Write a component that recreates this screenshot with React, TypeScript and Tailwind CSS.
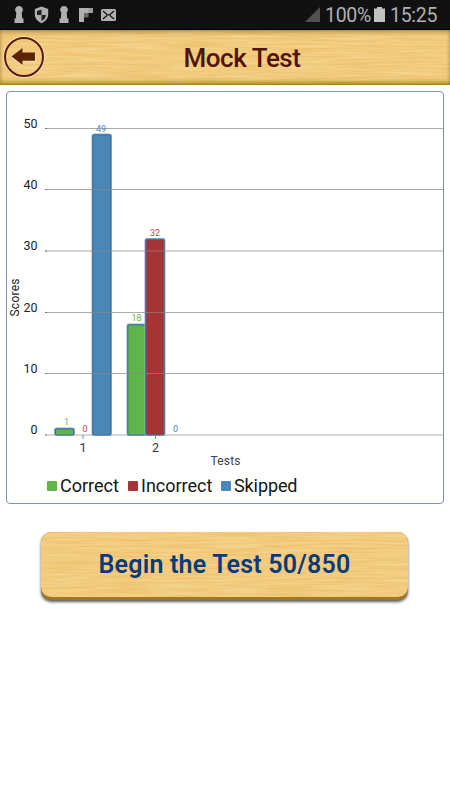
import React from "react";

function Wood({ id, seed }: { id: string; seed: number }) {
  return (
    <svg className="absolute inset-0 h-full w-full" aria-hidden="true">
      <filter id={id} x="0" y="0" width="100%" height="100%" colorInterpolationFilters="sRGB">
        <feTurbulence type="fractalNoise" baseFrequency="0.018 0.5" numOctaves="5" seed={seed} />
        <feColorMatrix values="0.04 0 0 0 0.927  0.12 0 0 0 0.735  0.2 0 0 0 0.395  0 0 0 0 1" />
      </filter>
      <rect width="100%" height="100%" filter={`url(#${id})`} />
    </svg>
  );
}

function Keyhole() {
  return (
    <svg width="10" height="17" viewBox="0 0 10 17" fill="#b0b0b0">
      <path d="M5 0a3.800 3.800 0 0 1 2.700 6.500L8.200 12.500H9.500V17H.5v-4.500h1.300L2.300 6.500A3.800 3.800 0 0 1 5 0Z" />
    </svg>
  );
}

function StatusBar() {
  return (
    <div className="flex h-[30px] items-center border-b border-black bg-[#111] pl-[14px] pr-[12px] text-[#b0b0b0]">
      <Keyhole />
      <svg className="ml-[10px]" width="15" height="18" viewBox="0 0 15 18">
        <path d="M7.500 .5 14.200 3v5.500c0 4-3 7-6.700 8.700C3.800 15.500.8 12.500.8 8.500V3Z" fill="#b0b0b0" />
        <path d="M7.500 3.500v5.500H3V5ZM7.500 9H12c-.3 2.700-2 4.700-4.500 6Z" fill="#202020" />
      </svg>
      <div className="ml-[10px]"><Keyhole /></div>
      <svg className="ml-[10px]" width="14" height="14" viewBox="0 0 14 14">
        <path d="M0 0h14v5H5v9H0Z" fill="#b0b0b0" />
        <path d="M5 5h4.500v4.500H5Z" fill="#666" />
        <path d="M5 5h4.500V0H14v5H9.500V5Z" fill="#999" />
      </svg>
      <svg className="ml-[8px]" width="15" height="12" viewBox="0 0 15 12">
        <rect width="15" height="12" rx="1.500" fill="#b0b0b0" />
        <path d="m2 2 4 3.400q1.500 1.200 3 0L13 2M2 10l4-3.500M13 10 9 6.500" fill="none" stroke="#151515" strokeWidth="1.300" />
      </svg>
      <svg className="ml-auto" width="15" height="15" viewBox="0 0 15 15">
        <path d="M15 0v15H0Z" fill="#505050" />
      </svg>
      <span className="ml-[5px] w-[47px] whitespace-nowrap pt-px text-[19.5px] leading-[29px] tracking-[-0.3px]">100%</span>
      <svg className="ml-[2px]" width="11" height="15" viewBox="0 0 11 15">
        <path d="M3 0h5v1.500h3v13.500H0V1.500h3Z" fill="#c2c2c2" />
      </svg>
      <span className="ml-[5px] w-[48px] whitespace-nowrap pt-px text-[19.5px] leading-[29px] tracking-[-0.3px]">15:25</span>
    </div>
  );
}

function Header() {
  return (
    <header className="relative h-[55px] overflow-hidden">
      <Wood id="wood-header" seed={4} />
      <div className="relative flex h-full items-center justify-center border-b border-[#a98222] pl-[34px] shadow-[inset_0_3px_4px_-1px_rgba(120,85,20,0.55),inset_0_-3px_4px_-1px_rgba(120,85,20,0.6)]">
        <svg className="absolute left-[3px] top-[6px]" width="42" height="42" viewBox="0 0 42 42">
          <circle cx="21" cy="21" r="19.500" fill="none" stroke="#fff1cb" strokeWidth="2.500" />
          <circle cx="21" cy="21" r="19" fill="none" stroke="#5c1b08" strokeWidth="2" />
          <path d="M8.500 21.500 19.500 13v4.500h13v8h-13V30Z" fill="#fff1cb" />
          <path d="M8.500 20.500 19.500 12v4.500H32v8.200H19.500V29Z" fill="#5b2404" />
        </svg>
        <h1 className="whitespace-nowrap pt-[2px] text-[26px] font-medium leading-[56px] tracking-[-0.45px] text-[#501408]">Mock Test</h1>
      </div>
    </header>
  );
}

const gridLines = [
  { label: "50", y: 36.5 },
  { label: "40", y: 97.5 },
  { label: "30", y: 159 },
  { label: "20", y: 220.5 },
  { label: "10", y: 281.5 },
];

const bars = [
  { x: 48, y: 336.5, w: 19, color: "#5fb548" },
  { x: 85.5, y: 42.5, w: 18.5, color: "#4a87b7" },
  { x: 120.5, y: 232.5, w: 18.5, color: "#5fb548" },
  { x: 138.5, y: 147, w: 19, color: "#a63335" },
];

const values = [
  { x: 59.5, y: 333, text: "1", color: "#6dbb58" },
  { x: 78, y: 340, text: "0", color: "#b84b4d" },
  { x: 94, y: 39.5, text: "49", color: "#4a87b7" },
  { x: 129.5, y: 229, text: "18", color: "#5fb548" },
  { x: 148, y: 144, text: "32", color: "#b84b4d" },
  { x: 168.5, y: 340, text: "0", color: "#4a87b7" },
];

function Chart() {
  return (
    <svg className="block" width="436" height="380" viewBox="0 0 436 380">
      <path d="M38 343H436" stroke="#d7d7d7" strokeWidth="2" />
      {bars.map((b) => (
        <g key={b.x}>
          <rect x={b.x} y={b.y} width={b.w} height={343 - b.y} rx="1.500" fill={b.color} stroke="#8eafc9" strokeWidth="2" />
          <rect x={b.x + 0.3} y={b.y + 0.3} width={b.w - 0.6} height={342.7 - b.y} rx="1.500" fill={b.color} stroke="#3f729e" strokeWidth="1.200" />
        </g>
      ))}
      {gridLines.map((g) => (
        <g key={g.label}>
          <path d={`M38 ${g.y}H436`} stroke="#888" strokeOpacity=".7" />
          <path d={`M38 ${g.y}h2`} stroke="#777" />
          <text x="30.500" y={g.y - 1} textAnchor="end" fontSize="12.500" fill="#222">{g.label}</text>
        </g>
      ))}
      <text x="30.500" y="342" textAnchor="end" fontSize="12.500" fill="#222">0</text>
      <path d="M38 343h2M76 343v4M148.500 343v4" stroke="#888" />
      {values.map((v) => (
        <text key={v.text + v.x} x={v.x} y={v.y} textAnchor="middle" fontSize="9" fill={v.color}>{v.text}</text>
      ))}
      <text x="76" y="360" textAnchor="middle" fontSize="12.500" fill="#333">1</text>
      <text x="148.500" y="360" textAnchor="middle" fontSize="12.500" fill="#333">2</text>
      <text x="218.500" y="372.500" textAnchor="middle" fontSize="12" textLength="30" fill="#444">Tests</text>
      <text transform="translate(12 205.500) rotate(-90)" textAnchor="middle" fontSize="12" textLength="38" fill="#222">Scores</text>
    </svg>
  );
}

function Legend() {
  return (
    <div className="flex h-[27px] items-center pl-[40px] text-[18px] leading-[26px] text-[#151515]">
      <i className="mr-[3px] size-[10px] rounded-[1px] bg-[#5fb548]" />
      <span className="w-[68px] whitespace-nowrap">Correct</span>
      <i className="mr-[3px] size-[10px] rounded-[1px] bg-[#a63335]" />
      <span className="w-[80px] whitespace-nowrap">Incorrect</span>
      <i className="mr-[3px] size-[10px] rounded-[1px] bg-[#4a87b7]" />
      <span className="whitespace-nowrap tracking-[-0.1px]">Skipped</span>
    </div>
  );
}

export default function App() {
  return (
    <div className="h-[800px] w-[450px] overflow-hidden bg-white font-[Roboto,sans-serif]">
      <StatusBar />
      <Header />
      <main className="px-[6px] pt-[6px]">
        <section className="h-[413px] w-[438px] overflow-hidden rounded-[4px] border border-[#7c91b0] bg-white">
          <Chart />
          <Legend />
        </section>
        <button className="ml-[35px] mt-[28px] block h-[68px] w-[367px] rounded-[10px] bg-[#a17822] pb-[3px] shadow-[0_2px_3px_rgba(0,0,0,0.65)]">
          <span className="relative flex h-[65px] items-center justify-center overflow-hidden rounded-[10px]">
            <Wood id="wood-button" seed={9} />
            <span className="relative whitespace-nowrap text-[25px] font-semibold leading-[30px] tracking-[0.2px] text-[#083b7b]">Begin the Test 50/850</span>
          </span>
        </button>
      </main>
    </div>
  );
}
